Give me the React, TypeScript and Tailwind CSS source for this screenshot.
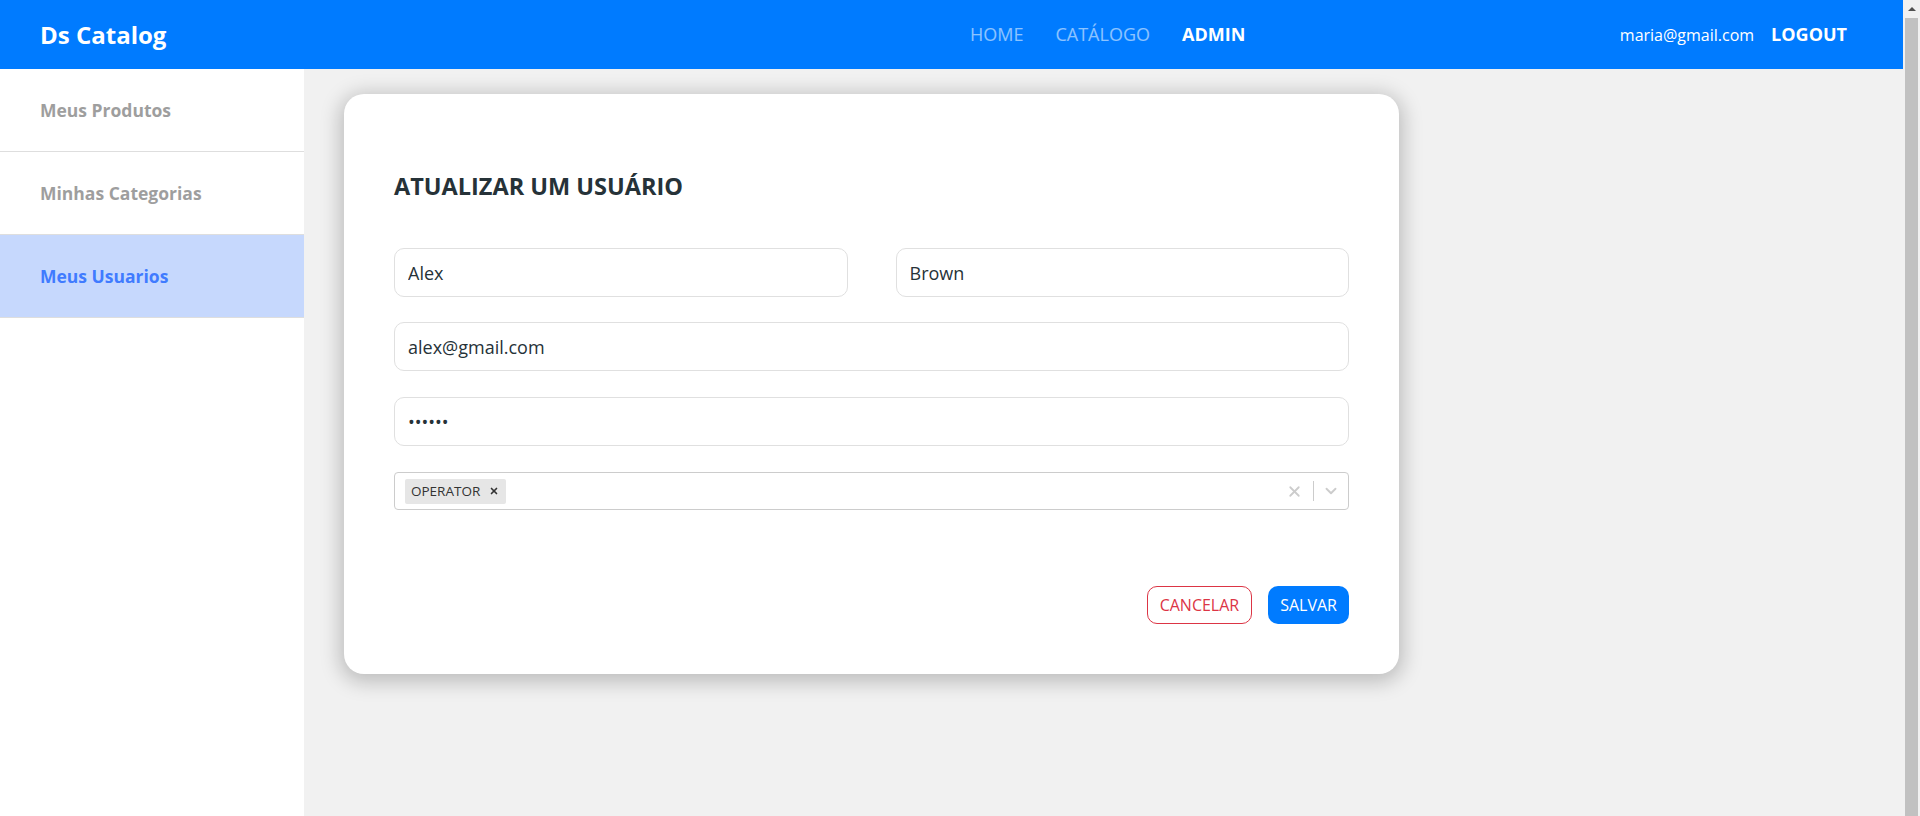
import { X, ChevronDown } from 'lucide-react';

const sideItems = [
  { label: 'Meus Produtos', active: false },
  { label: 'Minhas Categorias', active: false },
  { label: 'Meus Usuarios', active: true },
];

const inputCls =
  'h-[49px] w-full rounded-[10px] border border-[#e0e0e0] bg-white px-[13px] text-[18px] text-[#263238] outline-none';

export default function App() {
  return (
    <div className="flex h-[816px] w-full overflow-hidden bg-[#f1f1f1] font-['Open_Sans',sans-serif]">
      <div className="flex min-w-0 flex-1 flex-col">
        <header className="flex h-[69px] shrink-0 items-center bg-[#007bff] pl-10 pr-14">
          <a className="w-[127px] whitespace-nowrap text-[24px] font-bold text-white">Ds Catalog</a>
          <nav className="ml-[803px] flex items-center gap-[32px] text-[18px]">
            <span className="text-white/55">HOME</span>
            <span className="text-white/55">CATÁLOGO</span>
            <span className="font-bold text-white">ADMIN</span>
          </nav>
          <div className="ml-auto flex items-center gap-[17px] text-white">
            <span className="text-[16px]">maria@gmail.com</span>
            <span className="text-[18px] font-bold">LOGOUT</span>
          </div>
        </header>

        <div className="flex min-h-0 flex-1">
          <aside className="w-[304px] shrink-0 bg-white">
            {sideItems.map((it) => (
              <div
                key={it.label}
                className={`flex h-[83px] items-center border-b border-[#dedede] px-10 text-[17.5px] font-bold ${
                  it.active ? 'bg-[#c6d8fd] text-[#407bff]' : 'text-[#9e9e9e]'
                }`}
              >
                {it.label}
              </div>
            ))}
          </aside>

          <main className="flex-1 pl-10 pt-[25px]">
            <div className="w-[1055px] rounded-[20px] bg-white px-[50px] pb-[50px] pt-[74px] shadow-[0_4px_20px_4px_rgba(0,0,0,0.22)]">
              <h1 className="text-[23.5px] font-bold leading-[36px] text-[#263238]">ATUALIZAR UM USUÁRIO</h1>

              <div className="mt-[44px] grid grid-cols-2 gap-x-12">
                <input className={inputCls} defaultValue="Alex" />
                <input className={inputCls} defaultValue="Brown" />
              </div>
              <div className="mt-[25px]">
                <input className={inputCls} defaultValue="alex@gmail.com" />
              </div>
              <div className="mt-[26px]">
                <input type="password" className={inputCls} defaultValue="123456" />
              </div>

              <div className="mt-[26px] flex h-[38px] items-center rounded-[4px] border border-[#cccccc] bg-white">
                <div className="flex flex-1 items-center px-[10px]">
                  <div className="flex h-[25px] items-center rounded-[2px] bg-[#e6e6e6] pl-[6px] pr-[7px] text-[13.5px] text-[#333333]">
                    OPERATOR
                    <X className="ml-[9px] h-[10px] w-[10px]" strokeWidth={4} />
                  </div>
                </div>
                <div className="flex items-center pr-[8px]">
                  <X className="mr-[2px] h-[17px] w-[17px] text-[#cccccc]" strokeWidth={2.5} />
                  <span className="mx-[8px] h-[20px] w-px bg-[#cccccc]" />
                  <ChevronDown className="h-[18px] w-[18px] text-[#cccccc]" strokeWidth={2.5} />
                </div>
              </div>

              <div className="mt-[76px] flex justify-end gap-4">
                <button className="h-[38px] rounded-[10px] border border-[#dc3545] bg-white px-3 text-[16px] text-[#dc3545]">
                  CANCELAR
                </button>
                <button className="h-[38px] rounded-[10px] bg-[#007bff] px-3 text-[16px] text-white">
                  SALVAR
                </button>
              </div>
            </div>
          </main>
        </div>
      </div>

      {/* fake browser scrollbar */}
      <div className="flex w-[17px] shrink-0 flex-col items-center bg-[#f1f1f1]">
        <div className="flex h-[17px] items-center justify-center">
          <span className="h-0 w-0 border-x-[4px] border-b-[4px] border-x-transparent border-b-[#505050]" />
        </div>
        <div className="mt-px w-[13px] flex-1 bg-[#c1c1c1]" />
      </div>
    </div>
  );
}
